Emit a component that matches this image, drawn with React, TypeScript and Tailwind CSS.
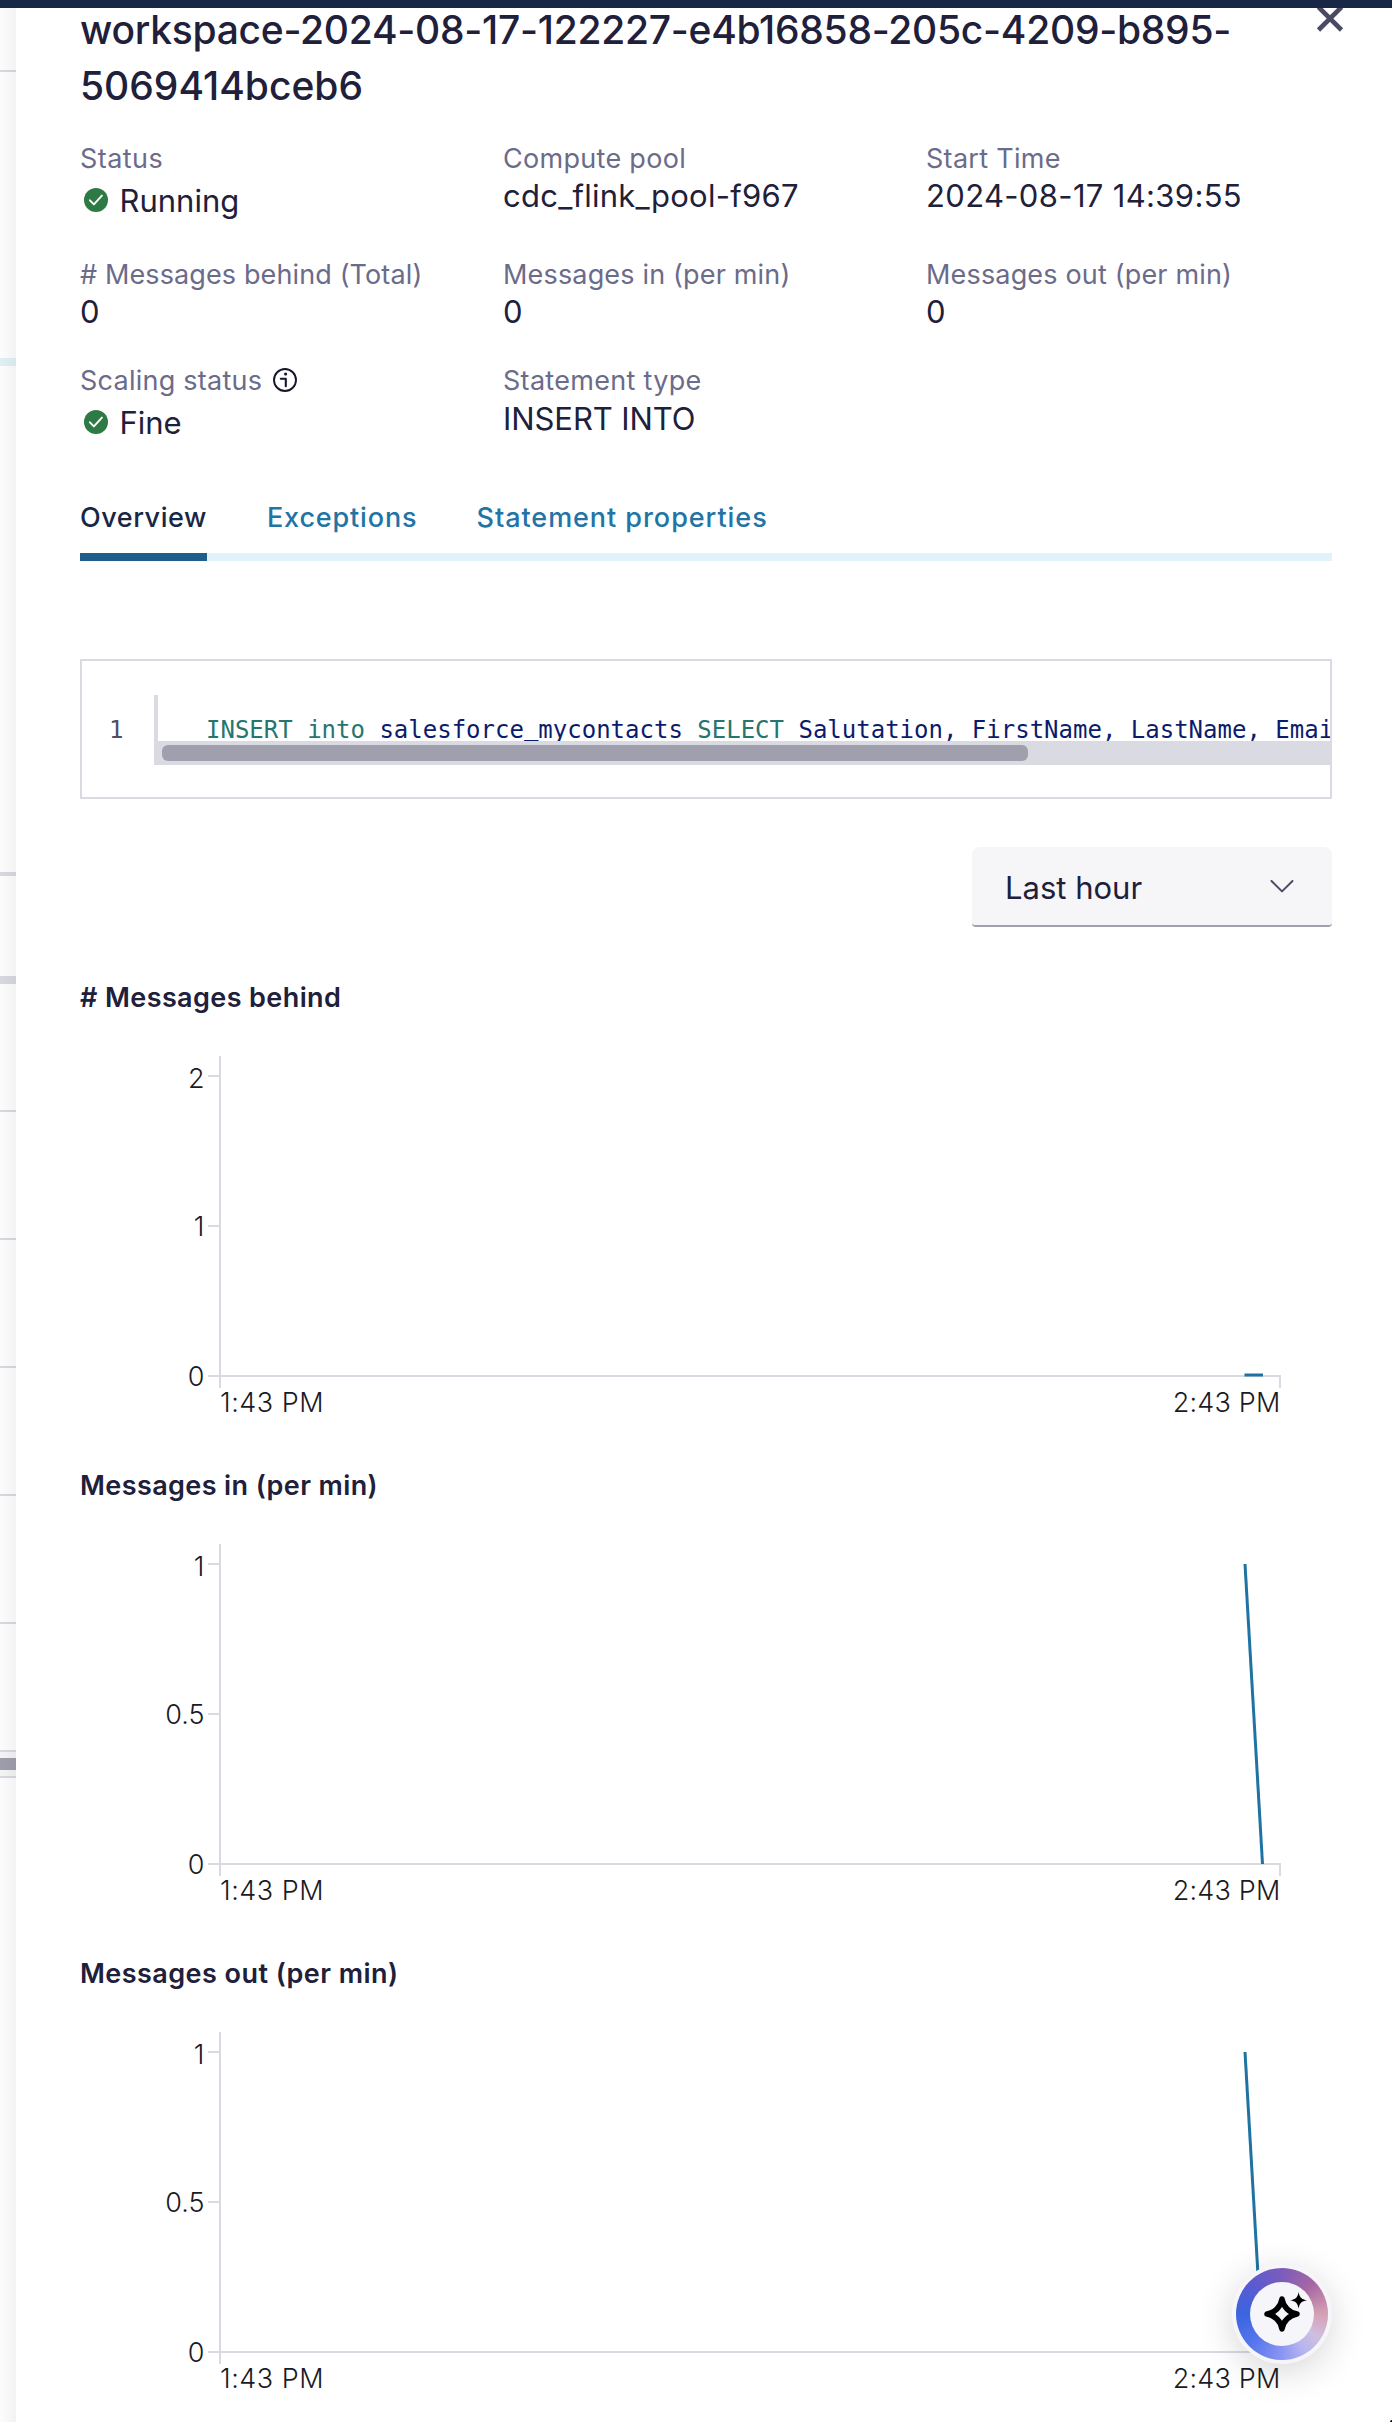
import type { ReactNode } from "react";

function CheckBadge() {
  return (
    <svg viewBox="0 0 24 24" className="size-6 shrink-0">
      <circle cx="12" cy="12" r="12" fill="#2e7a45" />
      <path d="M5.9 12.3l4 4.1 8-8.8" fill="none" stroke="#fff" strokeWidth="1.9" strokeLinecap="round" strokeLinejoin="round" />
    </svg>
  );
}

function InfoIcon() {
  return (
    <svg viewBox="0 0 24 24" className="size-6 shrink-0" fill="none" stroke="#17172b">
      <circle cx="12" cy="12" r="11" strokeWidth="1.9" />
      <path d="M7.8 10.8h5v7.4" strokeWidth="2.1" strokeLinecap="round" strokeLinejoin="round" />
      <circle cx="12.6" cy="6" r="1.6" fill="#17172b" stroke="none" />
    </svg>
  );
}

function Field({ label, labelClass, info, children }: { label: string; labelClass: string; info?: boolean; children: ReactNode }) {
  return (
    <div>
      <div className="flex h-8 items-center text-[27px] leading-8 text-[#6b6b8a]">
        <span className={`pt-0.5 ${labelClass}`}>{label}</span>
        {info && <span className="ml-[11px]"><InfoIcon /></span>}
      </div>
      {children}
    </div>
  );
}

function Value({ children, className = "" }: { children: ReactNode; className?: string }) {
  return <div className={`text-[31px] leading-[44px] text-[#20203a] ${className}`}>{children}</div>;
}

function StatusValue({ children }: { children: ReactNode }) {
  return (
    <div className="mt-1 flex h-11 items-center pl-1 text-[31px] leading-[44px] text-[#20203a]">
      <CheckBadge />
      <span className="ml-[11.5px] pt-0.5">{children}</span>
    </div>
  );
}

const TICK_Y = [63, 213, 363];
const TICK_TEXT_Y = [75, 223, 373];

function Chart({ title, titleClass, ticks, path }: { title: string; titleClass: string; ticks: string[]; path: string }) {
  return (
    <section className="h-[488px]">
      <h3 className={`h-8 text-[27px] leading-[34px] font-semibold text-[#20203a] ${titleClass}`}>{title}</h3>
      <svg width="1252" height="456" viewBox="0 0 1252 456" className="block">
        <g stroke="#dadae3" strokeWidth="2" fill="none">
          <path d="M140 43V375" />
          <path d="M140 363H1200V375" />
          {TICK_Y.map((y) => (
            <path key={y} d={`M128 ${y}H140`} />
          ))}
        </g>
        <path d={path} stroke="#1f73a3" strokeWidth="3" fill="none" />
        <g fill="#1a1a24" fontSize="27" fontWeight="300">
          {ticks.map((t, i) => (
            <text key={t} x="124.5" y={TICK_TEXT_Y[i]} textAnchor="end">{t}</text>
          ))}
          <text x="140" y="399" className="tracking-[0.5px]">1:43 PM</text>
          <text x="1200.5" y="399" textAnchor="end" className="tracking-[0.2px]">2:43 PM</text>
        </g>
      </svg>
    </section>
  );
}

function Backdrop() {
  return (
    <div className="relative w-4 shrink-0 overflow-hidden bg-white">
      <div className="mt-[62px] h-0.5 bg-[#dadae3]" />
      <div className="mt-[286px] h-2 bg-[#e1f2f9]" />
      <div className="mt-[506px] h-1 bg-[#dadae3]" />
      <div className="mt-[100px] h-2 bg-[#dadae3]" />
      <div className="mt-[126px] h-0.5 bg-[#dadae3]" />
      <div className="mt-[126px] h-0.5 bg-[#dadae3]" />
      <div className="mt-[126px] h-0.5 bg-[#dadae3]" />
      <div className="mt-[126px] h-0.5 bg-[#dadae3]" />
      <div className="mt-[126px] h-0.5 bg-[#dadae3]" />
      <div className="mt-[126px] flex h-7 flex-col justify-center border-y-2 border-[#dadae3] bg-[#f6f6f9]">
        <div className="h-3 bg-[#9f9fae]" />
      </div>
      <div className="absolute inset-0 bg-linear-to-r from-black/1 to-black/5" />
    </div>
  );
}

function AssistantButton() {
  return (
    <button className="absolute top-[2264px] left-[1232px] flex size-[100px] items-center justify-center rounded-full bg-[#f6f6fa] shadow-[0_8px_36px_rgba(0,0,0,0.16)]">
      <span className="flex size-[92px] items-center justify-center rounded-full bg-[conic-gradient(#7c5cbc_0deg,#a667a2_45deg,#d5a0b4_90deg,#cfbfe0_122deg,#b5b5f0_150deg,#8b95f2_180deg,#5576ec_225deg,#3b64df_270deg,#5a5bd0_315deg,#7c5cbc_360deg)]">
        <span className="flex size-16 items-center justify-center rounded-full bg-[#f6f6fa]">
          <svg viewBox="0 0 64 64" className="size-16">
            <path
              d="M32 17C33 24.5 39.5 31 47 32C39.5 33 33 39.5 32 47C31 39.5 24.5 33 17 32C24.5 31 31 24.5 32 17Z"
              fill="none"
              stroke="#000"
              strokeWidth="5.6"
              strokeLinejoin="round"
            />
            <path d="M48.6 10C49.6 15.5 51.4 17.3 57 18.3C51.4 19.3 49.6 21.1 48.6 26.6C47.6 21.1 45.8 19.3 40.2 18.3C45.8 17.3 47.6 15.5 48.6 10Z" fill="#000" />
          </svg>
        </span>
      </span>
    </button>
  );
}

export default function App() {
  return (
    <div className="relative flex h-[2422px] w-[1392px] flex-col overflow-hidden bg-white font-['Inter',sans-serif]">
      <div className="relative z-10 h-2 shrink-0 bg-[#172745]" />
      <div className="flex min-h-0 flex-1">
        <Backdrop />
        <main className="relative min-w-0 flex-1 bg-white pr-[60px] pl-16">
          <button className="absolute -top-0.5 left-[1300px]">
            <svg viewBox="0 0 28 28" className="size-7" stroke="#4a4a63" strokeWidth="4.6">
              <path d="M2.5 1L25.5 24M25.5 1L2.5 24" />
            </svg>
          </button>

          <h1 className="-mt-1.5 text-[39px] leading-[56px] font-medium tracking-[-0.26px] text-[#20203a]">
            workspace-2024-08-17-122227-e4b16858-205c-4209-b895-
            <br />
            <span className="tracking-[0px]">5069414bceb6</span>
          </h1>

          <div className="mt-7 grid grid-cols-3 grid-rows-[116px_106px_137px] gap-x-[17px]">
            <Field label="Status" labelClass="tracking-[0.45px]"><StatusValue>Running</StatusValue></Field>
            <Field label="Compute pool" labelClass="tracking-[0.3px]"><Value className="tracking-[0.25px]">cdc_flink_pool-f967</Value></Field>
            <Field label="Start Time" labelClass="tracking-[0.3px]"><Value className="tracking-[0.34px]">2024-08-17 14:39:55</Value></Field>
            <Field label="# Messages behind (Total)" labelClass="tracking-[0.12px]"><Value>0</Value></Field>
            <Field label="Messages in (per min)" labelClass="tracking-[0.17px]"><Value>0</Value></Field>
            <Field label="Messages out (per min)" labelClass="tracking-[0.17px]"><Value>0</Value></Field>
            <Field label="Scaling status" labelClass="tracking-[0.25px]" info><StatusValue>Fine</StatusValue></Field>
            <Field label="Statement type" labelClass="tracking-[0.3px]"><Value className="pt-px tracking-[-0.08px]">INSERT INTO</Value></Field>
          </div>

          <nav className="flex h-15 gap-[60px] border-b-8 border-[#e1f2f9] text-[27px] leading-[34px] font-medium text-[#2274a5]">
            <a className="h-15 w-[127px] border-b-8 border-[#1d5f8a] tracking-[0.55px] text-[#172745]">Overview</a>
            <a className="w-[149.5px] tracking-[0.84px]">Exceptions</a>
            <a className="tracking-[0.95px]">Statement properties</a>
          </nav>

          <div className="mt-[98px] flex h-[140px] overflow-hidden border-2 border-[#dadae3] pt-[34px] font-['DejaVu_Sans_Mono',monospace] text-[24px] leading-[46px]">
            <div className="w-[72px] shrink-0 pt-3 pl-[27px] text-[#4d4d66]">1</div>
            <div className="h-[70px] min-w-0 flex-1 border-l-4 border-[#dadae3]">
              <div className="h-[46px] overflow-hidden pt-3 pl-12 whitespace-pre text-[#0c1c6c]">
                <span className="text-[#26756f]">INSERT</span> <span className="text-[#26756f]">into</span> salesforce<span className="relative -top-[3px]">_</span>mycontacts <span className="text-[#26756f]">SELECT</span> Salutation, FirstName, LastName, Email
              </div>
              <div className="h-6 bg-[#dadae3] px-1 py-1">
                <div className="h-4 w-[866px] rounded-md bg-[#9f9fae]" />
              </div>
            </div>
          </div>

          <div className="mt-12 ml-auto flex h-20 w-[360px] items-center justify-between rounded-t-lg rounded-b-sm border-b-2 border-[#9f9fae] bg-[#f6f6f9] pr-[37px] pl-[33px] text-[31px] leading-[44px] text-[#20203a]">
            <span className="pt-[3px]">Last hour</span>
            <svg viewBox="0 0 26 14" className="h-3.5 w-[26px]" fill="none" stroke="#4a4a63" strokeWidth="2" strokeLinecap="round" strokeLinejoin="round">
              <path d="M2.5 2L13 12.4L23.5 2" />
            </svg>
          </div>

          <div className="mt-[54px]">
            <Chart title="# Messages behind" titleClass="tracking-[0.4px]" ticks={["2", "1", "0"]} path="M1164.5 362H1183" />
            <Chart title="Messages in (per min)" titleClass="tracking-[0.4px]" ticks={["1", "0.5", "0"]} path="M1165 63L1182.5 363" />
            <Chart title="Messages out (per min)" titleClass="tracking-[0.45px]" ticks={["1", "0.5", "0"]} path="M1165 63L1182.5 363" />
          </div>
        </main>
      </div>
      <AssistantButton />
      <div className="absolute right-0 bottom-0 size-0.5 rounded-tl-full bg-black" />
    </div>
  );
}
